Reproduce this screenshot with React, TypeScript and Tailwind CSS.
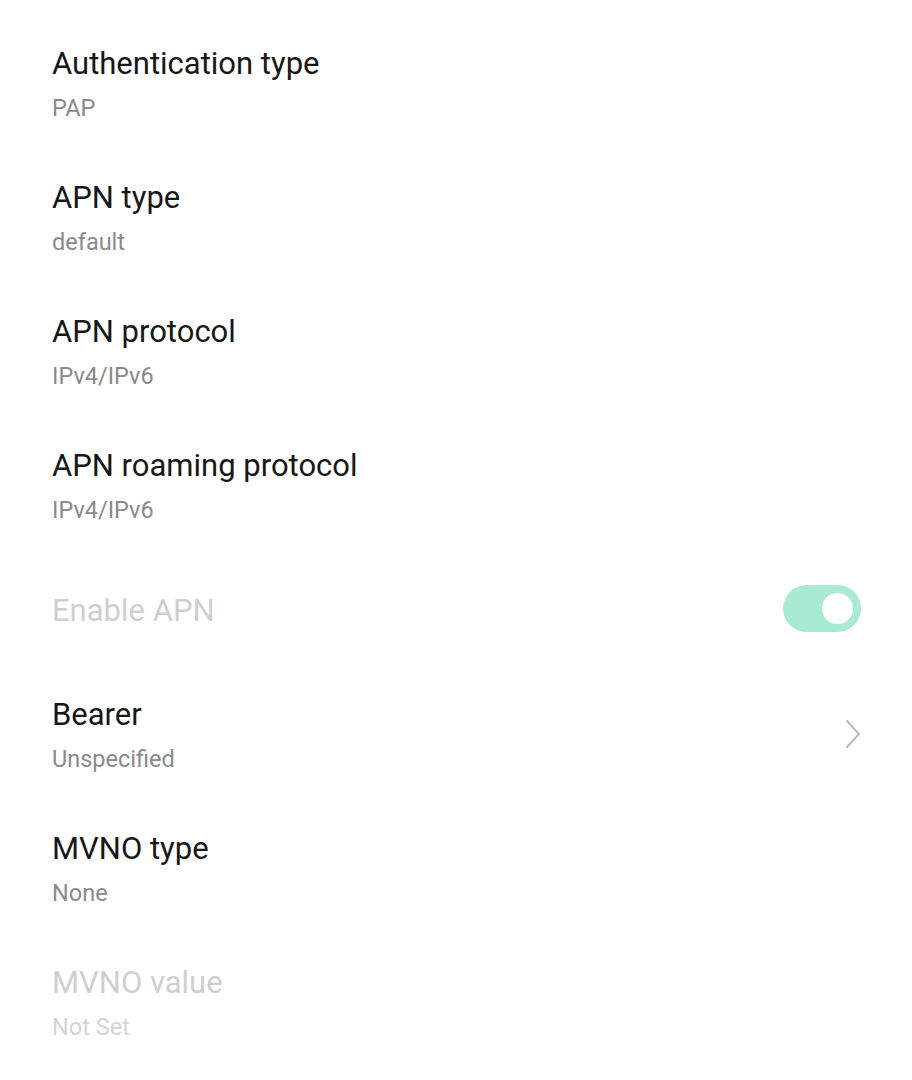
import React from "react";

const Row = ({ title, sub, disabled, chevron }: { title: string; sub: string; disabled?: boolean; chevron?: boolean }) => (
  <div className="h-[134px] flex items-center justify-between pl-[52px] pr-[50px]">
    <div className="flex flex-col">
      <div className={`text-[31px] leading-[36px] ${disabled ? "text-[#cfcfcf]" : "text-[#171717]"}`}>{title}</div>
      <div className={`text-[23.5px] leading-[30px] mt-[11px] ${disabled ? "text-[#d4d4d4]" : "text-[#8a8a8a]"}`}>{sub}</div>
    </div>
    {chevron && (
      <svg width="18" height="32" viewBox="0 0 18 32" className="mb-[2px]">
        <path d="M3 3 L15 16 L3 29" fill="none" stroke="#bdbdbd" strokeWidth="2.2" strokeLinecap="round" strokeLinejoin="round" />
      </svg>
    )}
  </div>
);

export default function App() {
  return (
    <div className="w-[912px] h-[1080px] bg-white overflow-hidden pt-[17px]" style={{ fontFamily: "Roboto, 'Noto Sans', sans-serif" }}>
      <Row title="Authentication type" sub="PAP" />
      <Row title="APN type" sub="default" />
      <Row title="APN protocol" sub="IPv4/IPv6" />
      <Row title="APN roaming protocol" sub="IPv4/IPv6" />
      <div className="h-[115px] flex items-center justify-between pl-[52px] pr-[51px]">
        <div className="text-[31px] leading-[36px] text-[#cfcfcf]">Enable APN</div>
        <div className="w-[78px] h-[47px] rounded-full bg-[#a9ebd1] flex items-center justify-end pr-[8px] mb-[4px]">
          <div className="w-[31px] h-[31px] rounded-full bg-white" />
        </div>
      </div>
      <Row title="Bearer" sub="Unspecified" chevron />
      <Row title="MVNO type" sub="None" />
      <Row title="MVNO value" sub="Not Set" disabled />
    </div>
  );
}
